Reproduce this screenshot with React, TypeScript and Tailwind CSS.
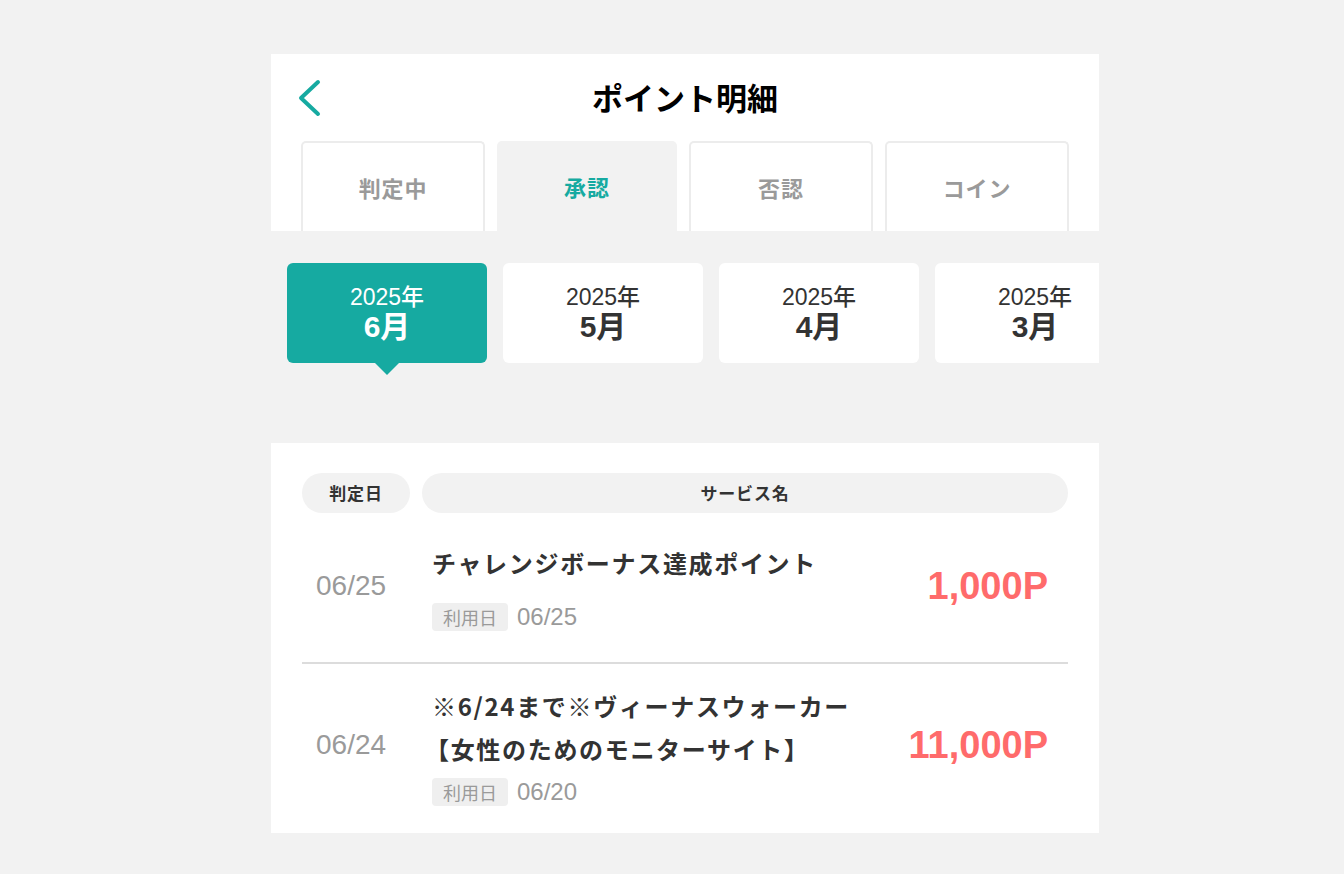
import { type ReactNode } from 'react'

const jp = "font-['Noto_Sans_CJK_JP',sans-serif]"
const num = "font-['Liberation_Sans','Noto_Sans_CJK_JP',sans-serif]"

const tabs = ['判定中', '承認', '否認', 'コイン']
const months = ['6月', '5月', '4月', '3月']

type Item = {
    date: string
    title: ReactNode
    used: string
    points: string
    rowClass: string
    badgeClass: string
}

const items: Item[] = [
    {
        date: '06/25',
        title: 'チャレンジボーナス達成ポイント',
        used: '06/25',
        points: '1,000P',
        rowClass: 'pt-[28px] pb-[31px]',
        badgeClass: 'mt-[19px]',
    },
    {
        date: '06/24',
        title: (
            <>
                ※6/24まで※ヴィーナスウォーカー
                <br />
                <span className="-ml-[7px]">【女性のためのモニターサイト】</span>
            </>
        ),
        used: '06/20',
        points: '11,000P',
        rowClass: 'pt-[20px] pb-[27px]',
        badgeClass: 'mt-[8px]',
    },
]

const BackIcon = () => (
    <svg width="28" height="40" viewBox="0 0 28 40" fill="none">
        <path
            d="M22 4 L5 20 L22 36"
            stroke="#16aaa1"
            strokeWidth="4"
            strokeLinecap="round"
            strokeLinejoin="round"
        />
    </svg>
)

const App = () => {
    return (
        <div className={`min-h-[874px] bg-[#f2f2f2] pt-[54px] pb-[40px] ${jp}`}>
            <div className="ml-[271px] w-[828px] bg-white">
                {/* header */}
                <div className="relative flex h-[87px] items-center justify-center">
                    <button className="absolute left-[25px] top-[24px]" type="button">
                        <BackIcon />
                    </button>
                    <h1 className="text-[31px] font-bold text-black">ポイント明細</h1>
                </div>

                {/* status tabs */}
                <div className="flex gap-3 px-[30px]">
                    {tabs.map((t, i) => (
                        <div
                            key={t}
                            className={`flex h-[90px] flex-1 items-center justify-center rounded-t-[5px] text-[22px] font-bold tracking-[0.04em] ${
                                i === 1
                                    ? 'bg-[#f2f2f2] text-[#16aaa1]'
                                    : 'border-2 border-b-0 border-[#ececec] text-[#9a9a9a]'
                            }`}
                        >
                            {t}
                        </div>
                    ))}
                </div>

                {/* months */}
                <div className="h-[212px] overflow-hidden bg-[#f2f2f2] pt-[32px] pl-4">
                    <div className="flex gap-4">
                        {months.map((m, i) => (
                            <div
                                key={m}
                                className={`relative flex h-[100px] w-[200px] shrink-0 flex-col items-center justify-center rounded-[6px] ${num} ${
                                    i === 0 ? 'bg-[#16aaa1] text-white' : 'bg-white text-[#333]'
                                }`}
                            >
                                <span className="text-[23px] leading-[26px] font-medium">2025年</span>
                                <span className="text-[30px] leading-[33px] font-bold">{m}</span>
                                {i === 0 && (
                                    <span className="absolute top-full left-1/2 -ml-[12px] h-0 w-0 border-x-[12px] border-t-[12px] border-x-transparent border-t-[#16aaa1]" />
                                )}
                            </div>
                        ))}
                    </div>
                </div>

                {/* list */}
                <div className="px-[31px] pt-[30px]">
                    <div className="flex gap-3">
                        <div className="flex h-[40px] w-[108px] items-center justify-center rounded-full bg-[#f2f2f2] text-[17px] font-bold tracking-[0.05em] text-[#333]">
                            判定日
                        </div>
                        <div className="flex h-[40px] flex-1 items-center justify-center rounded-full bg-[#f2f2f2] text-[17px] font-bold tracking-[0.05em] text-[#333]">
                            サービス名
                        </div>
                    </div>

                    {items.map((it, idx) => (
                        <div
                            key={it.date}
                            className={`flex items-center ${it.rowClass} ${
                                idx < items.length - 1 ? 'border-b-2 border-[#dcdcdc]' : ''
                            }`}
                        >
                            <div className={`w-[130px] shrink-0 pl-[14px] text-[28px] leading-none text-[#9a9a9a] ${num}`}>
                                {it.date}
                            </div>
                            <div className="flex-1">
                                <div className="text-[24px] leading-[43px] font-bold tracking-[0.07em] text-[#333]">
                                    {it.title}
                                </div>
                                <div className={`flex h-[28px] items-center gap-[9px] ${it.badgeClass}`}>
                                    <span className="flex h-[28px] items-center rounded-[4px] bg-[#efefef] px-[11px] text-[18px] leading-none text-[#9a9a9a]">
                                        利用日
                                    </span>
                                    <span className={`text-[24px] leading-none text-[#9a9a9a] ${num}`}>{it.used}</span>
                                </div>
                            </div>
                            <div className={`shrink-0 pr-[20px] text-[38px] leading-none font-bold text-[#ff6b6b] ${num}`}>
                                {it.points}
                            </div>
                        </div>
                    ))}
                </div>
            </div>
        </div>
    )
}

export default App
